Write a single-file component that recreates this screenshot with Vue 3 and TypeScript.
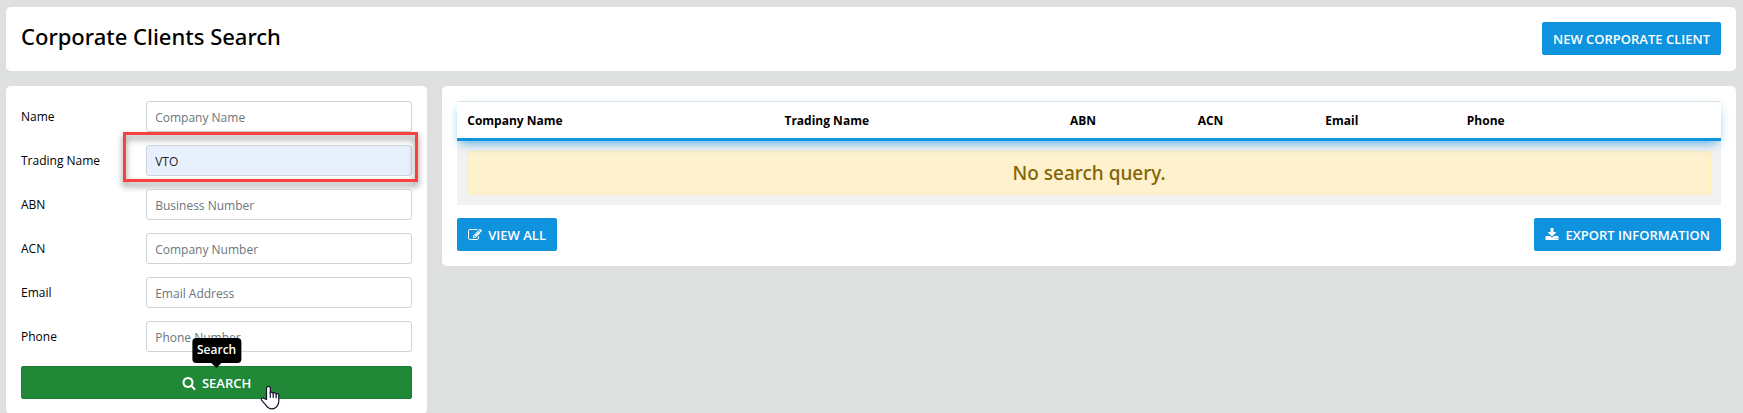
<script setup lang="ts">
import { reactive } from 'vue'

interface Field {
  key: string
  label: string
  placeholder: string
  highlighted?: boolean
}

const fields: Field[] = [
  { key: 'name', label: 'Name', placeholder: 'Company Name' },
  { key: 'trading', label: 'Trading Name', placeholder: 'Trading Name', highlighted: true },
  { key: 'abn', label: 'ABN', placeholder: 'Business Number' },
  { key: 'acn', label: 'ACN', placeholder: 'Company Number' },
  { key: 'email', label: 'Email', placeholder: 'Email Address' },
  { key: 'phone', label: 'Phone', placeholder: 'Phone Number' },
]

const query = reactive<Record<string, string>>({
  name: '',
  trading: 'VTO',
  abn: '',
  acn: '',
  email: '',
  phone: '',
})

const columns = ['Company Name', 'Trading Name', 'ABN', 'ACN', 'Email', 'Phone']
</script>

<template>
  <div class="page">
    <header class="card header">
      <h1>Corporate Clients Search</h1>
      <button type="button" class="btn">NEW CORPORATE CLIENT</button>
    </header>

    <div class="columns">
      <form class="card search" @submit.prevent>
        <div class="fields">
          <div v-for="f in fields" :key="f.key" class="field">
            <label :for="f.key">{{ f.label }}</label>
            <div class="control">
              <input
                :id="f.key"
                v-model="query[f.key]"
                type="text"
                autocomplete="off"
                :class="{ filled: f.highlighted }"
                :placeholder="f.placeholder"
              />
              <span v-if="f.highlighted" class="marker"></span>
            </div>
          </div>
        </div>
        <div class="submit">
          <button type="submit" class="btn green">
            <svg class="icon" viewBox="0 0 1792 1792" aria-hidden="true">
              <path d="M1216 832q0-185-131.500-316.500t-316.500-131.500-316.500 131.500-131.500 316.500 131.500 316.500 316.500 131.500 316.500-131.500 131.500-316.500zm512 832q0 52-38 90t-90 38q-54 0-90-38l-343-342q-179 124-399 124-143 0-273.500-55.500t-225-150-150-225-55.500-273.500 55.500-273.500 150-225 225-150 273.500-55.500 273.500 55.500 225 150 150 225 55.500 273.500q0 220-124 399l343 343q37 37 37 90z" />
            </svg>
            SEARCH
          </button>
          <span class="tooltip" role="tooltip">Search</span>
          <svg class="pointer" viewBox="0 0 20 25" aria-hidden="true">
            <path d="M6.500 14.500V3.200a1.900 1.900 0 0 1 3.800 0V8.200a1.500 1.500 0 0 1 2.900.5a1.500 1.500 0 0 1 2.900.6a1.500 1.500 0 0 1 2.700 1V16.500c0 2-.8 3.200-1.600 4.500c-1 1.800-2.700 2.800-5.200 2.800c-2.800 0-4.500-1.200-5.700-3.200L1.500 15.200c-.8-1.500.7-2.900 2.200-2Z" />
            <path d="M10.300 7.800v4.500M13.200 8.700v3.800M16.100 9.500v3.300" />
          </svg>
        </div>
      </form>

      <main class="card results">
        <table>
          <colgroup>
            <col v-for="c in columns" :key="c" :class="c.toLowerCase().replace(' ', '-')" />
          </colgroup>
          <thead>
            <tr>
              <th v-for="c in columns" :key="c" scope="col">{{ c }}</th>
            </tr>
          </thead>
          <tbody>
            <tr>
              <td :colspan="columns.length">
                <div class="alert" role="alert">No search query.</div>
              </td>
            </tr>
          </tbody>
        </table>
        <div class="actions">
          <button type="button" class="btn">
            <svg class="icon" viewBox="0 0 1792 1792" aria-hidden="true">
              <path d="M888 1184l116-116-152-152-116 116v56h96v96h56zm440-720q-16-16-33 1l-350 350q-17 17-1 33t33-1l350-350q17-17 1-33zm80 594v190q0 119-84.500 203.500t-203.500 84.500h-832q-119 0-203.500-84.500t-84.500-203.500v-832q0-119 84.500-203.500t203.500-84.500h832q63 0 117 25 15 7 18 23 3 17-9 29l-49 49q-14 14-32 8-23-6-45-6h-832q-66 0-113 47t-47 113v832q0 66 47 113t113 47h832q66 0 113-47t47-113v-126q0-13 9-22l64-64q15-15 35-7t20 29zm-96-738l288 288-672 672h-288v-288zm444 132l-92 92-288-288 92-92q28-28 68-28t68 28l152 152q28 28 28 68t-28 68z" />
            </svg>
            VIEW ALL
          </button>
          <button type="button" class="btn">
            <svg class="icon" viewBox="0 0 1792 1792" aria-hidden="true">
              <path d="M1344 1344q0-26-19-45t-45-19-45 19-19 45 19 45 45 19 45-19 19-45zm256 0q0-26-19-45t-45-19-45 19-19 45 19 45 45 19 45-19 19-45zm128-224v320q0 40-28 68t-68 28h-1472q-40 0-68-28t-28-68v-320q0-40 28-68t68-28h465l135 136q58 56 136 56t136-56l136-136h464q40 0 68 28t28 68zm-325-569q17 41-14 70l-448 448q-18 19-45 19t-45-19l-448-448q-31-29-14-70 17-39 59-39h256v-448q0-26 19-45t45-19h256q26 0 45 19t19 45v448h256q42 0 59 39z" />
            </svg>
            EXPORT INFORMATION
          </button>
        </div>
      </main>
    </div>
  </div>
</template>

<style>
body {
  background: #dee0df;
}
</style>

<style scoped>
.page {
  padding: 7px 7px 0 6px;
  font-family: 'Segoe UI', 'Open Sans', 'Noto Sans', sans-serif;
  font-size: 12px;
  line-height: 20px;
  color: #000;
}

.page *,
.page *::before,
.page *::after {
  box-sizing: border-box;
}

.card {
  padding: 15px;
  border-radius: 5px;
  background: #fff;
}

.header {
  display: flex;
  justify-content: space-between;
  align-items: flex-start;
  min-height: 64px;
  margin-bottom: 15px;
}

h1 {
  margin: 0;
  font-family: 'Segoe UI', 'Noto Sans', 'Open Sans', sans-serif;
  font-size: 22px;
  font-weight: 500;
  line-height: 28px;
}

.columns {
  display: grid;
  grid-template-columns: calc((100% + 15px) / 4 - 15px) minmax(0, 1fr);
  align-items: start;
  gap: 15px;
}

.btn {
  display: inline-flex;
  align-items: center;
  justify-content: center;
  gap: 6px;
  height: 33px;
  padding: 0 11px;
  border: 0;
  border-radius: 2px;
  background: #0f93df;
  color: #fff;
  font-family: inherit;
  font-size: 13px;
  font-weight: 600;
  line-height: 20px;
  white-space: nowrap;
  cursor: pointer;
}

.btn.green {
  width: 100%;
  border: 1px solid #1e7e34;
  background: #218838;
}

.icon {
  width: 14px;
  height: 14px;
  fill: currentColor;
}

.fields {
  display: grid;
  gap: 13px;
}

.field {
  display: grid;
  grid-template-columns: 32% minmax(0, 1fr);
  align-items: center;
}

.control {
  position: relative;
  display: flex;
}

input {
  width: 100%;
  height: 31px;
  padding: 2px 8px 0;
  border: 1px solid #ced4da;
  border-radius: 3px;
  background: #fff;
  color: #212529;
  font-family: inherit;
  font-size: 12px;
}

input::placeholder {
  color: #6c757d;
  opacity: 1;
}

input.filled {
  background: #e8f0fe;
}

.marker {
  position: absolute;
  inset: -13px -6px -6px -23px;
  border: 3px solid #f94141;
  filter: drop-shadow(0 4px 3px rgba(0, 0, 0, 0.5));
  pointer-events: none;
}

.submit {
  position: relative;
  display: flex;
  margin-top: 14px;
}

.tooltip {
  position: absolute;
  bottom: 36px;
  left: 50%;
  padding: 2px 5px 3px;
  border-radius: 4px;
  background: #000;
  color: #fff;
  font-size: 12px;
  font-weight: 600;
  transform: translateX(-50%);
}

.tooltip::after {
  content: '';
  position: absolute;
  top: 100%;
  left: 50%;
  margin-left: -5px;
  border: 5px solid transparent;
  border-top-color: #000;
  border-bottom: 0;
}

.pointer {
  position: absolute;
  top: 19px;
  left: 61%;
  width: 20px;
  height: 25px;
  fill: #fff;
  stroke: #14142b;
  stroke-width: 1.2;
  stroke-linecap: round;
  stroke-linejoin: round;
  pointer-events: none;
}

table {
  width: 100%;
  border-collapse: separate;
  border-spacing: 0;
  table-layout: fixed;
}

.company-name {
  width: 25.1%;
}

.trading-name {
  width: 22.6%;
}

.abn,
.acn {
  width: 10.1%;
}

.email {
  width: 11.2%;
}

thead {
  position: relative;
  box-shadow: 0 5px 10px -3px rgba(15, 147, 223, 0.7);
}

th {
  height: 40px;
  padding: 2px 10px 0;
  border-top: 1px solid #dee2e6;
  border-bottom: 3px solid #0f93df;
  background: #fff;
  font-weight: 700;
  text-align: left;
}

td {
  padding: 10px;
  background: #f2f2f2;
}

.alert {
  padding: 9px 12px;
  border: 1px solid #ffeeba;
  border-radius: 3px;
  background: #fef1cd;
  color: #856404;
  font-family: 'Segoe UI', 'Noto Sans', 'Open Sans', sans-serif;
  font-size: 19px;
  font-weight: 500;
  line-height: 24px;
  text-align: center;
}

.actions {
  display: flex;
  justify-content: space-between;
  margin-top: 13px;
}
</style>
